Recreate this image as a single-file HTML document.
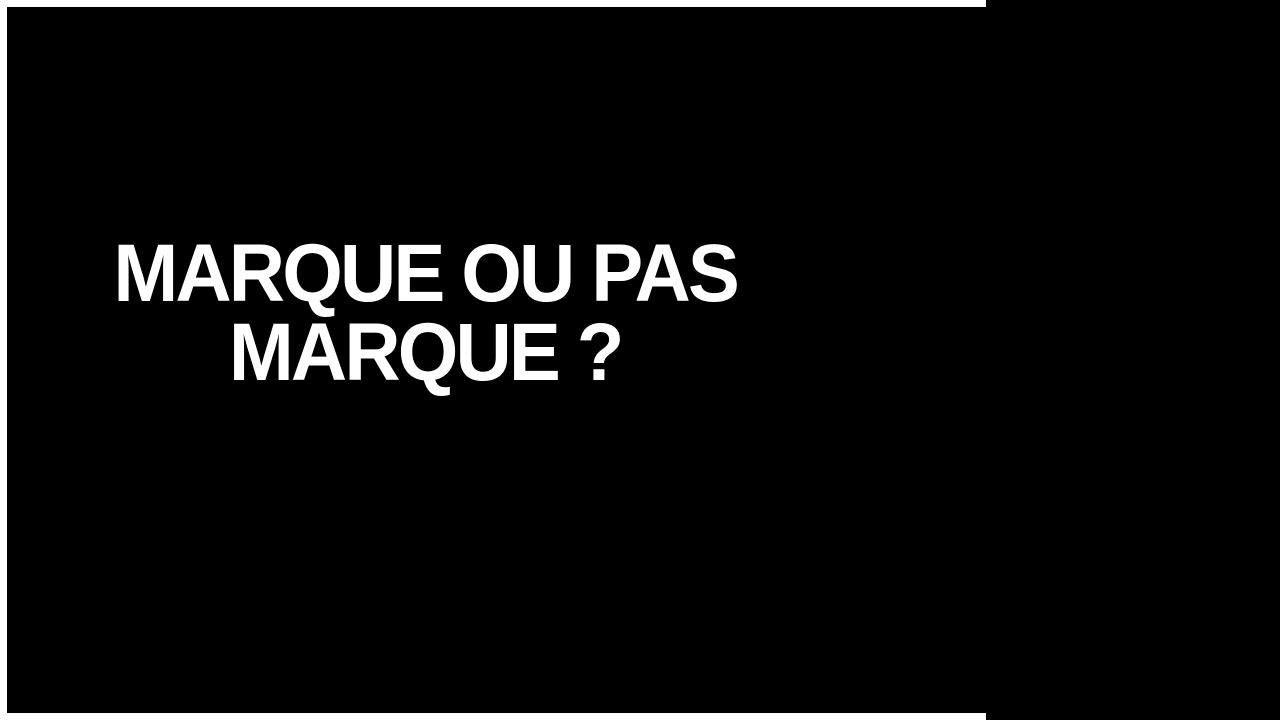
<!DOCTYPE html>
<html><head><meta charset="utf-8"><style>
html,body{margin:0;padding:0;width:1280px;height:720px;overflow:hidden;background:#000}
.w{position:absolute;background:#fff}
.t{position:absolute;left:24px;width:800px;top:234px;text-align:center;color:#fff;font-family:"Liberation Sans",Arial,sans-serif;font-weight:bold;font-size:82px;line-height:79px;letter-spacing:-3px;transform:scaleX(0.95);transform-origin:424px 0}
</style></head><body>
<div class="w" style="left:0;top:0;width:986px;height:7px"></div>
<div class="w" style="left:0;top:0;width:7px;height:720px"></div>
<div class="w" style="left:0;top:713px;width:986px;height:7px"></div>
<div class="t">MARQUE OU PAS<br>MARQUE ?</div>
</body></html>
